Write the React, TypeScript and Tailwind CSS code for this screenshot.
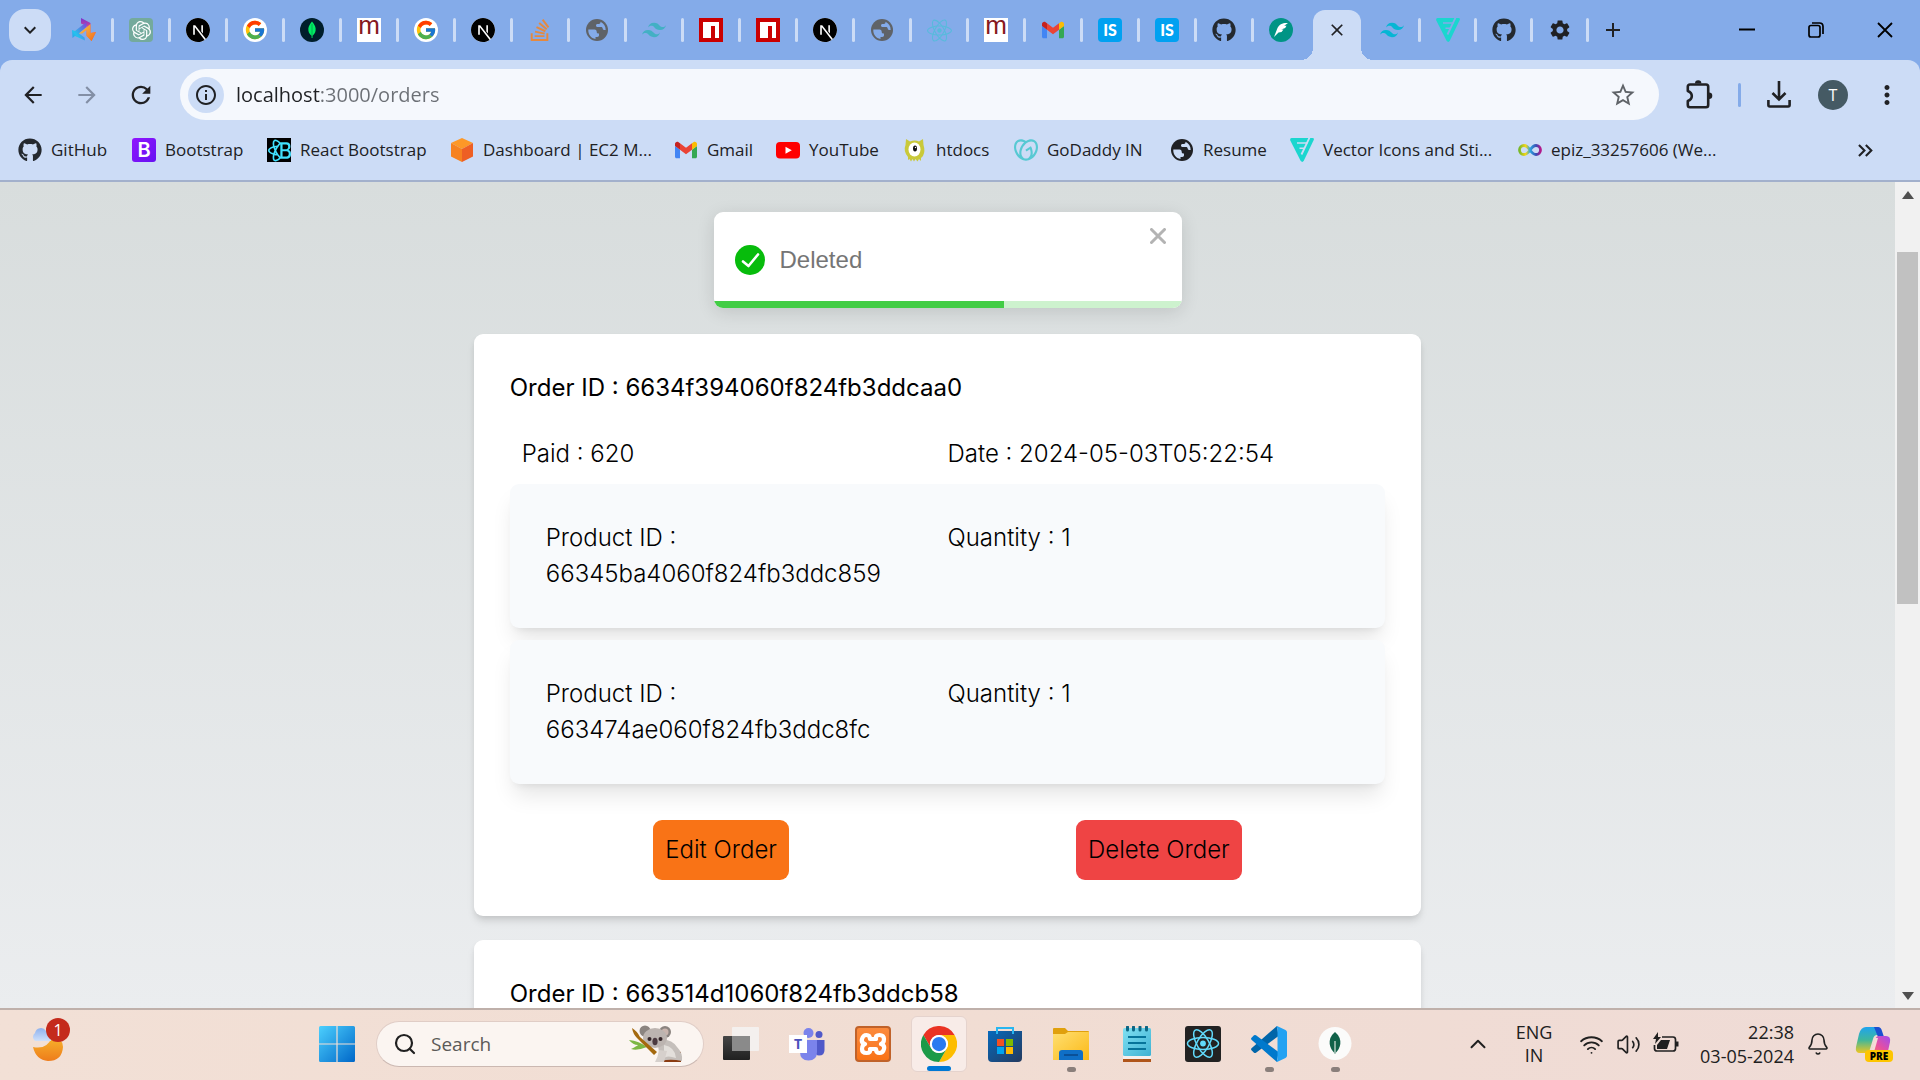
import React from "react";
import { FcGoogle } from "react-icons/fc";
import {
  SiNextdotjs,
  SiOpenai,
  SiStackoverflow,
  SiTailwindcss,
  SiGodaddy,
  SiReactbootstrap,
} from "react-icons/si";
import { FaGithub, FaReact } from "react-icons/fa";
import {
  MdArrowBack,
  MdArrowForward,
  MdRefresh,
  MdInfoOutline,
  MdStarBorder,
  MdMoreVert,
  MdSettings,
  MdAdd,
  MdClose,
  MdKeyboardArrowDown,
  MdKeyboardDoubleArrowRight,
} from "react-icons/md";
import { Bell, ChevronUp, Search, Volume2, Wifi } from "lucide-react";

/* ---------- Favicons ---------- */

function Gem() {
  return (
    <svg viewBox="0 0 24 24" className="size-6">
      <defs>
        <linearGradient id="gemA" x1="0" y1="0" x2="0" y2="1">
          <stop offset="0" stopColor="#7a2fd0" />
          <stop offset=".6" stopColor="#f0567c" />
          <stop offset="1" stopColor="#f26a1b" />
        </linearGradient>
        <linearGradient id="gemB" x1="1" y1="0" x2="0" y2="1">
          <stop offset="0" stopColor="#8a3bd6" />
          <stop offset=".7" stopColor="#23c4ee" />
          <stop offset="1" stopColor="#2f8fe8" />
        </linearGradient>
        <linearGradient id="gemC" x1="0" y1="0" x2="1" y2="1">
          <stop offset="0" stopColor="#f9c74a" />
          <stop offset="1" stopColor="#f26a1b" />
        </linearGradient>
      </defs>
      <path d="M9 0l9.500 5v10L24 14l-4.500 9-3-3.500-2-2V8L9 5.500z" fill="url(#gemA)" />
      <path d="M14.500 4L3 13l-3-1 .5 8L3 18l10 4.500-.5-3-5.500-4L14.500 9z" fill="url(#gemB)" />
      <path d="M18.500 6L7 15.500h3.500l4-3.500v6l5 5L24 14l-5.500 1z" fill="url(#gemC)" />
    </svg>
  );
}

function ChatGpt() {
  return (
    <span className="flex size-6 items-center justify-center rounded-sm bg-[#74aa9c] text-white">
      <SiOpenai size={19} />
    </span>
  );
}

function Next() {
  return (
    <span className="block size-6 rounded-full bg-white text-black">
      <SiNextdotjs size={24} />
    </span>
  );
}

function Google() {
  return (
    <span className="flex size-6 items-center justify-center rounded-full bg-white">
      <FcGoogle size={22} />
    </span>
  );
}

function Mongo() {
  return (
    <svg viewBox="0 0 24 24" className="size-6">
      <circle cx="12" cy="12" r="12" fill="#001e2b" />
      <path d="M12 3.500c3 3.500 4 6 3.600 9-.3 2.400-1.600 3.800-3.100 5.200V20h-.9v-2.300c-1.600-1.400-2.900-2.800-3.200-5.200C8 9.500 9 7 12 3.500z" fill="#00ed64" />
      <path d="M12 6v12" stroke="#00a04a" strokeWidth=".8" />
    </svg>
  );
}

function LetterM() {
  return (
    <span className="flex size-6 items-start justify-center bg-white font-['Liberation_Sans'] text-[26px] leading-[14px] text-[#861a1e]">
      m
    </span>
  );
}

function Globe({ tone = "#5f6368", hole = "#84abe9" }: { tone?: string; hole?: string }) {
  return (
    <svg viewBox="0 0 24 24" className="size-6">
      <circle cx="12" cy="12" r="11" fill={tone} />
      <path
        d="M3.300 11.500h6.200c1.600 0 2.200 1 2.200 2.300 0 1.500.9 1.700 2.300 1.700v1.800c0 1-.7 1.700-1.700 1.700h-1.800v1.900C6 20.300 3 16.500 3.300 11.500z"
        fill={hole}
      />
      <path
        d="M15.500 3.800c3.200 1.600 5.200 4.600 5.200 8.100h-1.600c-.9 0-1.400-.6-1.400-1.400 0-1-.7-1.600-1.700-1.600h-3.500c-.9 0-1.500-.6-1.500-1.500s.6-1.500 1.500-1.500h1.400c1 0 1.600-.7 1.600-1.700z"
        fill={hole}
      />
    </svg>
  );
}

function Npm() {
  return (
    <svg viewBox="0 0 24 24" className="size-6">
      <path fill="#cb0000" d="M0 0h24v24H0z" />
      <path fill="#fff" d="M4 4h16v16h-4V8h-4v12H4z" />
    </svg>
  );
}

function Gmail() {
  return (
    <svg viewBox="52 36 88 78" className="h-5 w-[22px]">
      <path fill="#4285f4" d="M58 108h14V74L52 59v43c0 3.320 2.690 6 6 6" />
      <path fill="#34a853" d="M120 108h14c3.320 0 6-2.690 6-6V59l-20 15" />
      <path fill="#fbbc04" d="M120 48v26l20-15v-8c0-7.420-8.470-11.650-14.400-7.200" />
      <path fill="#ea4335" d="M72 74V48l24 18 24-18v26L96 92" />
      <path fill="#c5221f" d="M52 51v8l20 15V48l-5.600-4.200c-5.940-4.450-14.400-.220-14.400 7.200" />
    </svg>
  );
}

function IsBadge() {
  return (
    <span className="flex size-6 items-center justify-center rounded bg-[#00a1f1] font-[Lato] text-base font-black text-white">
      IS
    </span>
  );
}

function Feather() {
  return (
    <svg viewBox="0 0 24 24" className="size-6">
      <circle cx="12" cy="12" r="12" fill="#009485" />
      <path d="M19 5c-5-.5-9 1.500-10.500 5L5 19l4.500-4.500 3-.5 2-2.500h-2.300l4-1.500 1.300-2.200h-2.300z" fill="#fff" />
    </svg>
  );
}

function Flaticon({ gap = "#ccdcf6" }: { gap?: string }) {
  return (
    <svg viewBox="0 0 24 24" className="size-6">
      <path d="M1.500 0h21q2 .2 1.200 2L13.800 22.800q-1.500 2.200-3.200 0L.3 2.500Q-.4.400 1.500 0z" fill="#1bd6cf" />
      <g fill="none" stroke={gap}>
        <path d="M19.800-1L11.500 16.500" strokeWidth="1.800" />
        <path d="M7 5h10.500M9.500 10.200h5" strokeWidth="1.500" />
      </g>
    </svg>
  );
}

function Bootstrap() {
  return (
    <span className="flex size-6 items-center justify-center rounded-[3px] bg-gradient-to-br from-[#9013fe] to-[#6610f2] font-[Inter] text-xl font-semibold leading-6 text-white">
      B
    </span>
  );
}

function ReactBootstrap() {
  return (
    <span className="flex size-6 items-center justify-center bg-black text-[#41e0fd]">
      <SiReactbootstrap size={23} />
    </span>
  );
}

function Cube() {
  return (
    <svg viewBox="0 0 24 24" className="size-6">
      <path d="M12 0l11 5-11 6L1 5z" fill="#fd9827" />
      <path d="M1 5l11 6v13L1 18.500z" fill="#f68220" />
      <path d="M23 5l-11 6v13l11-5.500z" fill="#ee5f24" />
    </svg>
  );
}

function YouTube() {
  return (
    <svg viewBox="0 0 24 24" className="size-6">
      <rect y="4" width="24" height="16.500" rx="4" fill="#f00" />
      <path d="M9.500 8.700l6.300 3.500-6.300 3.500z" fill="#fff" />
    </svg>
  );
}

function Monster() {
  return (
    <svg viewBox="0 0 24 24" className="size-6">
      <path
        d="M3 1l4 2.500q5-2 9 0L20 1l.5 6q2 6-.5 11l-2 2v3l-2-2-1.500 2.500L12.500 21 11 23.500 9.500 21 8 23.500 6.500 21 5 22v-3Q0 13 2.500 7z"
        fill="#c9c93a"
      />
      <ellipse cx="11.500" cy="11.500" rx="6" ry="7" fill="#fff" />
      <ellipse cx="12" cy="10.500" rx="2" ry="3" fill="#111" />
      <circle cx="12.500" cy="9.500" r=".7" fill="#fff" />
    </svg>
  );
}

function Infinity() {
  return (
    <svg viewBox="0 0 24 24" className="size-6">
      <defs>
        <linearGradient id="inf" x1="0" x2="1">
          <stop offset="0" stopColor="#7ab929" />
          <stop offset=".3" stopColor="#f9d616" />
          <stop offset=".5" stopColor="#2aa6e0" />
          <stop offset=".8" stopColor="#3b4cb4" />
          <stop offset="1" stopColor="#b01a8b" />
        </linearGradient>
      </defs>
      <path
        d="M12 12c-2-3-3.500-4.500-6-4.500a4.500 4.500 0 0 0 0 9c2.500 0 4-1.500 6-4.500s3.500-4.500 6-4.500a4.500 4.500 0 0 1 0 9c-2.500 0-4-1.500-6-4.500z"
        fill="none"
        stroke="url(#inf)"
        strokeWidth="2.800"
      />
    </svg>
  );
}

/* ---------- Browser chrome ---------- */

const tabsBefore: { name: string; icon: React.ReactNode }[] = [
  { name: "Gem", icon: <Gem /> },
  { name: "ChatGPT", icon: <ChatGpt /> },
  { name: "Next.js", icon: <Next /> },
  { name: "Google", icon: <Google /> },
  { name: "MongoDB", icon: <Mongo /> },
  { name: "Mongoose", icon: <LetterM /> },
  { name: "Google", icon: <Google /> },
  { name: "Next.js", icon: <Next /> },
  { name: "Stack Overflow", icon: <SiStackoverflow size={22} className="text-[#e5893f]" /> },
  { name: "Page", icon: <Globe /> },
  { name: "Tailwind", icon: <SiTailwindcss size={24} className="text-[#43b0c4]" /> },
  { name: "npm", icon: <Npm /> },
  { name: "npm", icon: <Npm /> },
  { name: "Next.js", icon: <Next /> },
  { name: "Page", icon: <Globe /> },
  { name: "React", icon: <FaReact size={25} className="text-[#57bbdc]" /> },
  { name: "Mongoose", icon: <LetterM /> },
  { name: "Gmail", icon: <Gmail /> },
  { name: "IS", icon: <IsBadge /> },
  { name: "IS", icon: <IsBadge /> },
  { name: "GitHub", icon: <FaGithub size={24} className="text-[#24292f]" /> },
  { name: "Feather", icon: <Feather /> },
];

const tabsAfter: { name: string; icon: React.ReactNode }[] = [
  { name: "Tailwind", icon: <SiTailwindcss size={24} className="text-[#06b6d4]" /> },
  { name: "Flaticon", icon: <Flaticon gap="#84abe9" /> },
  { name: "GitHub", icon: <FaGithub size={24} className="text-[#24292f]" /> },
  { name: "Settings", icon: <MdSettings size={24} className="text-[#202124]" /> },
];

function TabStrip() {
  return (
    <div className="flex h-[60px] shrink-0 items-center bg-[#84abe9]">
      <button aria-label="Search tabs" className="ml-[9px] mr-1.5 flex size-[42px] shrink-0 items-center justify-center rounded-2xl bg-[#ccdcf6] text-[#202124]">
        <MdKeyboardArrowDown size={24} />
      </button>
      {tabsBefore.map((tab, i) => (
        <button key={i} aria-label={tab.name} className="flex h-6 w-[57px] shrink-0 items-center">
          <span className="flex flex-1 items-center justify-center">{tab.icon}</span>
          <span className={i === tabsBefore.length - 1 ? "h-6 w-[3px]" : "h-6 w-[3px] rounded-full bg-[#ccdcf6]"} />
        </button>
      ))}
      <div className="relative ml-0.5 mr-1 flex h-[50px] w-12 shrink-0 items-center justify-center self-end rounded-t-xl bg-[#ccdcf6] pb-2.5 before:absolute before:-left-3 before:bottom-0 before:size-3 before:bg-[radial-gradient(circle_at_0_0,transparent_12px,#ccdcf6_12px)] after:absolute after:-right-3 after:bottom-0 after:size-3 after:bg-[radial-gradient(circle_at_100%_0,transparent_12px,#ccdcf6_12px)]">
        <button aria-label="Close tab" className="text-[#202124]">
          <MdClose size={20} />
        </button>
      </div>
      {tabsAfter.map((tab, i) => (
        <button key={i} aria-label={tab.name} className="flex h-6 w-14 shrink-0 items-center">
          <span className="flex flex-1 items-center justify-center">{tab.icon}</span>
          <span className="h-6 w-[3px] rounded-full bg-[#ccdcf6]" />
        </button>
      ))}
      <button aria-label="New tab" className="ml-3 text-[#202124]">
        <MdAdd size={24} />
      </button>
      <div className="ml-auto flex text-black">
        <button aria-label="Minimise" className="flex h-[60px] w-[68px] items-center justify-center">
          <svg viewBox="0 0 16 16" className="size-4"><path d="M0 7.500h16" stroke="currentColor" strokeWidth="2" /></svg>
        </button>
        <button aria-label="Restore" className="flex h-[60px] w-[69px] items-center justify-center">
          <svg viewBox="0 0 16 16" className="size-4" fill="none" stroke="currentColor" strokeWidth="1.700">
            <rect x="1" y="3.500" width="11" height="11.500" rx="2" />
            <path d="M4 1h7.500q3.500 0 3.500 3.500V12" />
          </svg>
        </button>
        <button aria-label="Close" className="flex h-[60px] w-[70px] items-center justify-center">
          <svg viewBox="0 0 16 16" className="size-4"><path d="M1 1l14 14M15 1L1 15" stroke="currentColor" strokeWidth="1.800" /></svg>
        </button>
      </div>
    </div>
  );
}

function Toolbar() {
  return (
    <div className="flex h-[69px] items-center text-[#202124]">
      <button aria-label="Back" className="ml-[9px] flex w-12 justify-center"><MdArrowBack size={26} /></button>
      <button aria-label="Forward" className="ml-1.5 flex w-12 justify-center text-[#838fa5]"><MdArrowForward size={26} /></button>
      <button aria-label="Reload" className="ml-1.5 flex w-12 justify-center"><MdRefresh size={28} /></button>
      <div className="ml-[15px] flex h-[51px] flex-1 items-center rounded-full bg-[#f5f8fd] pl-2 pr-[22px]">
        <button aria-label="Site information" className="flex size-9 items-center justify-center rounded-full bg-[#ccdcf6]">
          <MdInfoOutline size={24} />
        </button>
        <input
          aria-label="Address"
          defaultValue="localhost:3000/orders"
          className="ml-3 min-w-0 flex-1 bg-[linear-gradient(90deg,#202124_84px,#6b6f75_84px)] bg-clip-text text-[20px] leading-7 text-transparent outline-none"
        />
        <button aria-label="Bookmark this tab" className="text-[#5f6368]"><MdStarBorder size={28} /></button>
      </div>
      <button aria-label="Extensions" className="ml-[27px]">
        <svg viewBox="0 0 28 30" className="h-[30px] w-7" fill="none" stroke="currentColor" strokeWidth="2.600">
          <path d="M4 4.500h16q2.200 0 2.200 2.200V25q0 2.200-2.200 2.200H4q-2.200 0-2.200-2.200v-4q4-1.500 4-5t-4-5V6.700Q1.800 4.500 4 4.500z" strokeLinejoin="round" />
          <path d="M9 3.500a3.200 3.200 0 0 1 6.400 0zM23 12.500a3.300 3.300 0 0 1 0 6.600z" fill="currentColor" stroke="none" />
        </svg>
      </button>
      <span className="ml-6 h-6 w-[3px] rounded-full bg-[#84abe9]" />
      <button aria-label="Downloads" className="ml-[26px]">
        <svg viewBox="0 0 24 28" className="h-7 w-6" fill="none" stroke="currentColor" strokeWidth="2.600">
          <path d="M12 0v18M5.500 12l6.500 6.500L18.500 12M1.400 19v5q0 1.500 1.500 1.500h18.200q1.500 0 1.500-1.500v-5" />
        </svg>
      </button>
      <button aria-label="Profile" className="ml-[27px] flex size-[30px] items-center justify-center rounded-full bg-[#455a64] text-base text-white">T</button>
      <button aria-label="Menu" className="ml-6 mr-[18px]"><MdMoreVert size={30} /></button>
    </div>
  );
}

const bookmarks: { label: string; icon: React.ReactNode; width: string }[] = [
  { label: "GitHub", icon: <FaGithub size={24} className="text-[#24292f]" />, width: "w-[114px]" },
  { label: "Bootstrap", icon: <Bootstrap />, width: "w-[135px]" },
  { label: "React Bootstrap", icon: <ReactBootstrap />, width: "w-[183px]" },
  { label: "Dashboard | EC2 M...", icon: <Cube />, width: "w-[224px]" },
  { label: "Gmail", icon: <Gmail />, width: "w-[102px]" },
  { label: "YouTube", icon: <YouTube />, width: "w-[127px]" },
  { label: "htdocs", icon: <Monster />, width: "w-[111px]" },
  { label: "GoDaddy IN", icon: <SiGodaddy size={24} className="text-[#57c9d3]" />, width: "w-[156px]" },
  { label: "Resume", icon: <Globe tone="#202124" hole="#ccdcf6" />, width: "w-[120px]" },
  { label: "Vector Icons and Sti...", icon: <Flaticon />, width: "w-[228px]" },
  { label: "epiz_33257606 (We...", icon: <Infinity />, width: "w-[220px]" },
];

function BookmarksBar() {
  return (
    <nav className="flex h-[51px] items-start pl-[18px] pt-[7px] text-[17px] leading-7 text-[#202124]">
      {bookmarks.map((b) => (
        <a key={b.label} href="#" className={`flex shrink-0 items-center gap-[9px] whitespace-nowrap ${b.width}`}>
          <span className="flex w-6 shrink-0 justify-center">{b.icon}</span>
          {b.label}
        </a>
      ))}
      <button aria-label="More bookmarks" className="ml-auto mr-[42px] mt-0.5"><MdKeyboardDoubleArrowRight size={25} /></button>
    </nav>
  );
}

/* ---------- Page ---------- */

interface Product {
  id: string;
  quantity: number;
}

function ProductRow({ id, quantity }: Product) {
  return (
    <div className="grid grid-cols-2 rounded-[9px] bg-slate-50 p-9 shadow-[0_15px_22px_-4px_rgb(0_0_0/0.1),0_6px_9px_-6px_rgb(0_0_0/0.1)]">
      <p>Product ID : {id}</p>
      <p>Quantity : {quantity}</p>
    </div>
  );
}

function OrderCard({ id, children }: { id: string; children?: React.ReactNode }) {
  return (
    <article className="w-1/2 rounded-[9px] bg-white p-9 shadow-[0_6px_9px_-1px_rgb(0_0_0/0.1),0_3px_6px_-2px_rgb(0_0_0/0.1)]">
      <h2 className="font-normal">Order ID : {id}</h2>
      {children}
    </article>
  );
}

function Toast() {
  return (
    <div role="status" className="absolute left-1/2 top-[30px] flex h-24 w-[468px] -translate-x-1/2 items-center overflow-hidden rounded-[9px] bg-white px-[21px] font-['Liberation_Sans'] text-2xl font-normal text-[#757575] shadow-[0_4px_18px_rgb(0_0_0/0.12)]">
      <svg viewBox="0 0 30 30" className="size-[30px]">
        <circle cx="15" cy="15" r="15" fill="#07bc0c" />
        <path d="M8 16.500l5.500 4.500L23 9.500" fill="none" stroke="#fff" strokeWidth="2.600" strokeLinecap="round" strokeLinejoin="round" />
      </svg>
      <p className="ml-[15px]">Deleted</p>
      <button aria-label="Close notification" className="absolute right-4 top-4">
        <svg viewBox="0 0 16 16" className="size-4"><path d="M1.500 1.500l13 13M14.500 1.500l-13 13" stroke="#b3b3b3" strokeWidth="3" strokeLinecap="round" /></svg>
      </button>
      <div className="absolute inset-x-0 bottom-0 h-[7px] bg-[#cdf2ce]">
        <div className="h-full w-[62%] bg-[#42cd45]" />
      </div>
    </div>
  );
}

function Scrollbar() {
  return (
    <div className="flex w-[25px] shrink-0 flex-col items-center bg-[#f1f1f1] text-[#505050]">
      <svg viewBox="0 0 12 8" className="mt-[9px] h-2 w-3"><path d="M6 0l6 8H0z" fill="currentColor" /></svg>
      <div className="mt-[53px] h-[352px] w-[21px] bg-[#c1c1c1]" />
      <svg viewBox="0 0 12 8" className="mb-2 mt-auto h-2 w-3"><path d="M0 0h12L6 8z" fill="currentColor" /></svg>
    </div>
  );
}

function OrdersPage() {
  return (
    <div className="flex min-h-0 flex-1">
      <main className="relative flex min-w-0 flex-1 flex-col items-center gap-6 overflow-hidden bg-gradient-to-b from-[#d8dddd] to-[#ebedef] pt-[152px] font-[Inter] text-2xl font-light leading-9 text-black [font-optical-sizing:none]">
        <OrderCard id="6634f394060f824fb3ddcaa0">
          <div className="mt-[18px] grid grid-cols-2">
            <p className="p-3">Paid : 620</p>
            <p className="py-3">Date : 2024-05-03T05:22:54</p>
          </div>
          <div className="flex flex-col gap-3">
            <ProductRow id="66345ba4060f824fb3ddc859" quantity={1} />
            <ProductRow id="663474ae060f824fb3ddc8fc" quantity={1} />
          </div>
          <div className="mt-9 flex justify-around">
            <button className="rounded-[9px] bg-[#f97316] p-3">Edit Order</button>
            <button className="rounded-[9px] bg-[#ef4444] p-3">Delete Order</button>
          </div>
        </OrderCard>
        <OrderCard id="663514d1060f824fb3ddcb58" />
        <Toast />
      </main>
      <Scrollbar />
    </div>
  );
}

/* ---------- Taskbar ---------- */

function Weather() {
  return (
    <svg viewBox="0 0 36 36" className="size-9">
      <defs>
        <linearGradient id="moon" x1="0" y1="0" x2="0" y2="1">
          <stop offset="0" stopColor="#f7b42c" />
          <stop offset="1" stopColor="#ee7c1b" />
        </linearGradient>
        <linearGradient id="cloud" x1="0" y1="0" x2="0" y2="1">
          <stop offset="0" stopColor="#8fb2ee" />
          <stop offset="1" stopColor="#cfe0fa" />
        </linearGradient>
      </defs>
      <path d="M3 21q14 3 19-10 11 1 11 10-1 14-15 14Q6 34 3 21z" fill="url(#moon)" />
      <path d="M5 15a5 5 0 0 1 0-8 6 6 0 0 1 11-2q5 4 5 10z" fill="url(#cloud)" />
    </svg>
  );
}

function WindowsLogo() {
  return (
    <svg viewBox="0 0 36 36" className="size-9">
      <defs>
        <linearGradient id="win" x1="0" y1="0" x2="36" y2="36" gradientUnits="userSpaceOnUse">
          <stop offset="0" stopColor="#4cd0fe" />
          <stop offset="1" stopColor="#0067c8" />
        </linearGradient>
      </defs>
      <path d="M1.500 0H17.400V17.400H0V1.500Q0 0 1.500 0zM18.600 0H34.500Q36 0 36 1.500V17.400H18.600zM0 18.600H17.400V36H1.500Q0 36 0 34.500zM18.600 18.600H36V34.500Q36 36 34.500 36H18.600z" fill="url(#win)" />
    </svg>
  );
}

function Koala() {
  return (
    <svg viewBox="0 0 54 38" className="h-[38px] w-[54px]">
      <path d="M0 15q10 1 18 7-10 4-16 2 6-3 7-4-5 0-9-5z" fill="#7cb743" />
      <path d="M27 37l8-14 17 4v10z" fill="#8a3c12" />
      <path d="M27 16q14-4 21 6 6 6 5 14-9-2-16-1l-10 2q6-10 0-21z" fill="#c5bfbb" />
      <path d="M35 20q11 2 12 13-9-3-12 0z" fill="#e3dfdb" />
      <circle cx="16" cy="6" r="5.500" fill="#8b8480" />
      <circle cx="36" cy="7" r="6" fill="#8b8480" />
      <circle cx="36" cy="7" r="3.500" fill="#c9b5ae" />
      <ellipse cx="26" cy="13" rx="12" ry="10" fill="#bcb4b0" />
      <circle cx="20.500" cy="14" r="2" fill="#35262a" />
      <circle cx="31.500" cy="14" r="2" fill="#35262a" />
      <ellipse cx="26" cy="16.500" rx="2.600" ry="3.800" fill="#4c3a40" />
      <path d="M3 3q5 3 8 9l17 15-3 3L8 13Q4 9 3 3z" fill="#a4690e" />
      <path d="M26 37q3-5 4-12l8 1-3 11z" fill="#d6d0cc" />
    </svg>
  );
}

function TaskView() {
  return (
    <svg viewBox="0 0 36 36" className="size-9">
      <defs>
        <linearGradient id="tvA" x1="0" y1="0" x2="0" y2="1">
          <stop offset="0" stopColor="#454545" />
          <stop offset="1" stopColor="#202020" />
        </linearGradient>
      </defs>
      <rect x="0" y="10" width="27" height="24" rx="1" fill="url(#tvA)" />
      <rect x="9" y="1" width="27" height="24" rx="1" fill="#f4f4f4" fillOpacity=".82" />
      <rect x="9" y="10" width="18" height="15" fill="#8a8a8a" />
    </svg>
  );
}

function Teams() {
  return (
    <span className="relative block size-9">
      <svg viewBox="0 0 36 36" className="size-9">
        <circle cx="19.500" cy="7" r="5" fill="#7b83eb" />
        <circle cx="30" cy="8.500" r="3.500" fill="#5059c9" />
        <path d="M26 14h9.500v10q0 5.500-5.500 5.500-4 0-4-5z" fill="#5059c9" />
        <path d="M11 14h17v12q0 8.500-8.500 8.500T11 26z" fill="#7b83eb" />
      </svg>
      <span className="absolute left-0 top-[9px] flex size-[18px] items-center justify-center bg-white text-sm font-bold text-[#4b53bc]">T</span>
    </span>
  );
}

function Xampp() {
  return (
    <span className="flex size-9 items-center justify-center rounded border-2 border-[#c0622a] bg-gradient-to-b from-[#fb8a3c] to-[#f97316] text-white">
      <svg viewBox="0 0 28 28" className="size-7" fill="none" stroke="currentColor" strokeWidth="4.200" strokeLinejoin="round">
        <path d="M11 9q0-4-3.500-4T3 9t3 5q-3 1-3 5t4.500 4 3.500-4h6q0 4 3.500 4t4.500-4-3-5q3-1 3-5t-4.500-4T17 9z" />
      </svg>
    </span>
  );
}

function Chrome() {
  return (
    <svg viewBox="0 0 48 48" className="size-9">
      <path fill="#ea3323" d="M3.200 12A24 24 0 0 1 44.800 12H24A12 12 0 0 0 13.600 30z" />
      <path fill="#fdbd00" d="M44.800 12A24 24 0 0 1 24 48L34.400 30A12 12 0 0 0 24 12z" />
      <path fill="#1c9a48" d="M24 48A24 24 0 0 1 3.200 12L13.600 30A12 12 0 0 0 34.400 30z" />
      <circle cx="24" cy="24" r="12" fill="#fff" />
      <circle cx="24" cy="24" r="9.500" fill="#2a7af0" />
    </svg>
  );
}

function Store() {
  return (
    <svg viewBox="0 0 36 36" className="size-9">
      <defs>
        <linearGradient id="store" x1="0" y1="0" x2="1" y2="1">
          <stop offset="0" stopColor="#0669bc" />
          <stop offset="1" stopColor="#243a5e" />
        </linearGradient>
      </defs>
      <path d="M10 8V2h16v6" fill="none" stroke="#28b6f0" strokeWidth="2" />
      <path d="M1 5h34v27q0 4-4 4H5q-4 0-4-4z" fill="url(#store)" />
      <path d="M10 8V5M26 8V5" stroke="#28b6f0" strokeWidth="2" />
      <path d="M10 13h7v7h-7z" fill="#f25022" />
      <path d="M19 13h7v7h-7z" fill="#7fba00" />
      <path d="M10 21h7v7h-7z" fill="#00a4ef" />
      <path d="M19 21h7v7h-7z" fill="#ffb900" />
    </svg>
  );
}

function Folder() {
  return (
    <svg viewBox="0 0 36 36" className="size-9">
      <defs>
        <linearGradient id="fold" x1="0" y1="0" x2="1" y2="1">
          <stop offset="0" stopColor="#ffdf71" />
          <stop offset="1" stopColor="#fbb917" />
        </linearGradient>
      </defs>
      <path d="M0 3q0-1 1-1h11l3 3h20q1 0 1 1v6H0z" fill="#e0a00d" />
      <path d="M0 8h12l3-2h21v28H0z" fill="url(#fold)" />
      <path d="M6 34v-7q0-3 3-3h18q3 0 3 3v7z" fill="#0f6fc6" />
      <path d="M11 29h14" stroke="#0a4a8c" strokeWidth="1.600" />
    </svg>
  );
}

function Notepad() {
  return (
    <svg viewBox="0 0 36 36" className="size-9">
      <defs>
        <linearGradient id="note" x1="0" y1="0" x2="1" y2="1">
          <stop offset="0" stopColor="#7fe0f2" />
          <stop offset="1" stopColor="#3fb2d3" />
        </linearGradient>
      </defs>
      <path d="M4 32h28v4H4z" fill="#b0551a" />
      <path d="M4 29h28v4H4z" fill="#f5f0ee" />
      <rect x="4" y="2" width="28" height="28" rx="1.500" fill="url(#note)" />
      <path d="M9 11h18M9 17h18M9 23h18" stroke="#06749a" strokeWidth="2" />
      <path d="M8.500 1v3M14.500 1v3M21 1v3M27.500 1v3" stroke="#0b6583" strokeWidth="3" strokeLinecap="round" />
    </svg>
  );
}

function ReactTile() {
  return (
    <svg viewBox="0 0 36 36" className="size-9">
      <rect width="36" height="36" rx="3" fill="#222" />
      <g fill="none" stroke="#61dafb" strokeWidth="1.500">
        <ellipse cx="18" cy="17.500" rx="15.500" ry="6" />
        <ellipse cx="18" cy="17.500" rx="15.500" ry="6" transform="rotate(60 18 17.500)" />
        <ellipse cx="18" cy="17.500" rx="15.500" ry="6" transform="rotate(120 18 17.500)" />
      </g>
      <circle cx="18" cy="17.500" r="2.900" fill="#61dafb" />
    </svg>
  );
}

function VsCode() {
  return (
    <svg viewBox="0 0 36 36" className="size-9">
      <path d="M26 0l1.500 10L5 26.700q-1 .8-2 0L.5 24.300q-.9-1 0-2z" fill="#0065a9" />
      <path d="M5 9.300L27.500 26 26 36 .5 13.700q-.9-1 0-2L3 9.300q1-.8 2 0z" fill="#0079cc" />
      <path d="M26 0l8.500 4q1.500.7 1.500 2.300v23.400q0 1.600-1.500 2.300L26 36q-1-1 .5-2.500V2.500Q25 1 26 0z" fill="#23a2f2" />
    </svg>
  );
}

function Compass() {
  return (
    <svg viewBox="0 0 36 36" className="size-9">
      <circle cx="18" cy="17.500" r="16.500" fill="#fbfbfa" />
      <path d="M18 6q6 5 5.300 12-.6 5-4.800 9h-1q-4.200-4-4.800-9Q12 11 18 6z" fill="#116149" />
      <path d="M18 15v13" stroke="#a7c4b8" strokeWidth="1.600" />
    </svg>
  );
}

function Copilot() {
  return (
    <span className="relative block size-9">
      <svg viewBox="0 0 36 36" className="size-9">
        <defs>
          <linearGradient id="cpA" x1="0" y1="0" x2="0" y2="1">
            <stop offset="0" stopColor="#1fa3ef" />
            <stop offset=".5" stopColor="#3fb79c" />
            <stop offset="1" stopColor="#f0c61e" />
          </linearGradient>
          <linearGradient id="cpB" x1="1" y1="0" x2="0" y2="1">
            <stop offset="0" stopColor="#a04df0" />
            <stop offset=".5" stopColor="#e64fa0" />
            <stop offset="1" stopColor="#fb8a4a" />
          </linearGradient>
        </defs>
        <path d="M11 1h11q3 0 4 4l1 4h-5q-3 0-4 4l-3 10q-1 4-5 4H5q-5 0-4-6L4 8q2-7 7-7z" fill="url(#cpA)" />
        <path d="M19 1h4q3 0 4 4l2 6h-6z" fill="#1b4fd0" />
        <path d="M24 10h7q5 0 4 6l-2 9q-1 4-5 4H12q4-1 5-5l3-10q1-4 4-4z" fill="url(#cpB)" />
        <path d="M20 12h3l-4 14h-3z" fill="#f6dcd6" />
      </svg>
      <span className="absolute -right-0.5 bottom-0 flex h-3 w-7 items-center justify-center rounded-sm bg-[#fdc500] text-[10px] font-extrabold text-black">PRE</span>
    </span>
  );
}

const apps: { name: string; icon: React.ReactNode; state?: "active" | "running" }[] = [
  { name: "Task view", icon: <TaskView /> },
  { name: "Teams", icon: <Teams /> },
  { name: "XAMPP", icon: <Xampp /> },
  { name: "Chrome", icon: <Chrome />, state: "active" },
  { name: "Store", icon: <Store /> },
  { name: "Explorer", icon: <Folder />, state: "running" },
  { name: "Notepad", icon: <Notepad /> },
  { name: "React", icon: <ReactTile /> },
  { name: "VS Code", icon: <VsCode />, state: "running" },
  { name: "Compass", icon: <Compass />, state: "running" },
];

function Taskbar() {
  return (
    <footer className="flex h-[72px] shrink-0 items-center border-t-2 border-[#bfb0aa] bg-gradient-to-r from-[#f2e0d6] via-[#f1ddd3] to-[#efdbd6] pb-0.5 text-[#202020]">
      <div className="w-[304px] pl-[30px]">
        <button aria-label="Weather" className="relative flex">
          <Weather />
          <span className="absolute -top-2 left-4 flex size-6 items-center justify-center rounded-full bg-[#c42b1c] text-base text-white">1</span>
        </button>
      </div>
      <button aria-label="Start" className="flex w-[66px] justify-center"><WindowsLogo /></button>
      <label className="ml-1.5 mr-1 flex h-[46px] w-[328px] items-center rounded-full border border-[#e0cdc6] border-b-[#cbb8b1] bg-[#fbf5f1] pl-4 pr-5">
        <Search size={24} strokeWidth={2.2} className="shrink-0" />
        <input aria-label="Search" placeholder="Search" className="ml-3.5 min-w-0 flex-1 bg-transparent text-[19px] outline-none placeholder:text-[#5c5a58]" />
        <Koala />
      </label>
      {apps.map((app) => (
        <button key={app.name} aria-label={app.name} className="flex w-[66px] justify-center">
          <span
            className={
              app.state === "active"
                ? "relative flex size-14 items-center justify-center rounded-md border border-[#e5d3cd] bg-[#f8ece8]"
                : "relative flex size-14 items-center justify-center"
            }
          >
            {app.icon}
            {app.state === "active" && <span className="absolute bottom-0 h-[5px] w-6 rounded-full bg-[#0078d4]" />}
            {app.state === "running" && <span className="absolute bottom-0 h-[5px] w-[9px] rounded-full bg-[#8a7f7b]" />}
          </span>
        </button>
      ))}
      <div className="ml-auto flex items-center pr-[29px] text-[18px] leading-6">
        <button aria-label="Hidden icons"><ChevronUp size={26} strokeWidth={1.8} /></button>
        <button className="ml-5 w-[46px] text-center leading-[23px]">ENG<br />IN</button>
        <Wifi size={25} strokeWidth={1.8} className="ml-[22px]" />
        <Volume2 size={25} strokeWidth={1.6} className="ml-3" />
        <svg viewBox="0 0 26 24" className="ml-3 h-6 w-[26px]" fill="none" stroke="currentColor" strokeWidth="1.700">
          <path d="M9 5h11q2.500 0 2.500 2.500v9Q22.500 19 20 19H4q-2.500 0-2.500-2.500V13" />
          <path d="M8 8h9l-3 9H4v-4z" fill="currentColor" stroke="none" />
          <path d="M5 0L0 7h3L2 12l6-7H5z" fill="currentColor" stroke="none" />
          <path d="M24 9.500v5" strokeWidth="3" />
        </svg>
        <button className="ml-3 w-[103px] whitespace-nowrap text-right">22:38<br />03-05-2024</button>
        <Bell size={24} strokeWidth={1.6} className="ml-3" />
        <button aria-label="Copilot" className="ml-[25px]"><Copilot /></button>
      </div>
    </footer>
  );
}

export default function App() {
  return (
    <div className="flex h-screen flex-col overflow-hidden bg-[#84abe9] font-['Open_Sans',sans-serif]">
      <TabStrip />
      <header className="shrink-0 rounded-t-xl border-b-2 border-[#a2b0cc] bg-[#ccdcf6]">
        <Toolbar />
        <BookmarksBar />
      </header>
      <OrdersPage />
      <Taskbar />
    </div>
  );
}
